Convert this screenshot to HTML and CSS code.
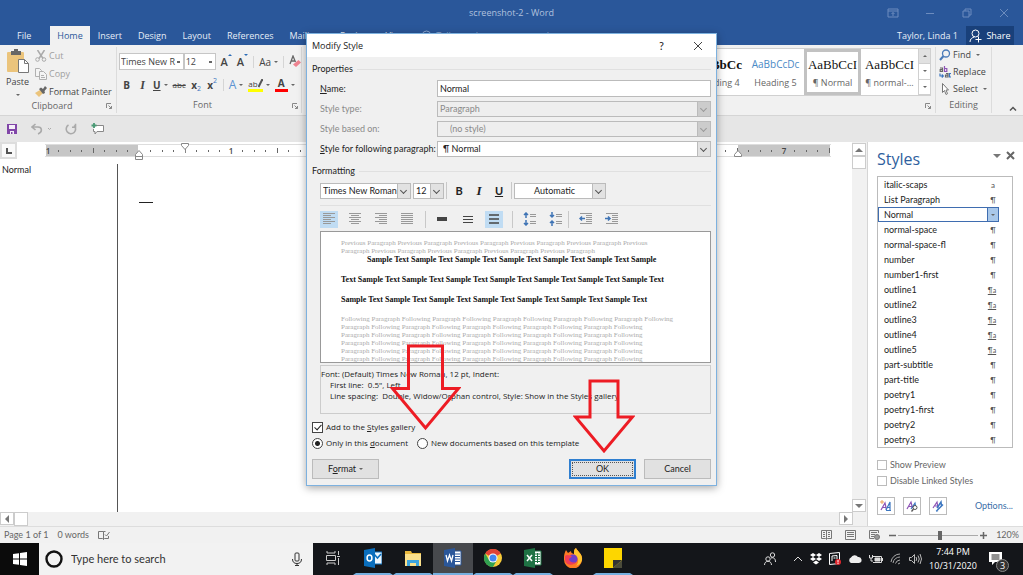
FILE: index.html
```html
<!DOCTYPE html>
<html lang="en">
<head>
<meta charset="utf-8">
<title>screenshot-2 - Word</title>
<link rel="stylesheet" href="styles.css">
</head>
<body>
<header class="top">
  <div class="titlebar">
    <h1 class="doc-title">screenshot-2 - Word</h1>
    <div class="win-buttons">
      <button aria-label="Ribbon options"><svg width="12" height="12" viewBox="0 0 12 12"><path d="M1 2h10v8H1zM1 4h10M6 9V5.500M4.500 7 6 5.500 7.500 7"/></svg></button>
      <button aria-label="Minimize"><svg width="12" height="12" viewBox="0 0 12 12"><path d="M2 6.500h8"/></svg></button>
      <button aria-label="Restore"><svg width="12" height="12" viewBox="0 0 12 12"><path d="M2 4h6v6H2zM4 4V2h6v6H8"/></svg></button>
      <button aria-label="Close window"><svg width="12" height="12" viewBox="0 0 12 12"><path d="M2 2l8 8M10 2l-8 8"/></svg></button>
    </div>
  </div>
  <nav class="tabs">
    <a href="#" class="tab tab-file">File</a>
    <a href="#" class="tab tab-active">Home</a>
    <a href="#" class="tab">Insert</a>
    <a href="#" class="tab">Design</a>
    <a href="#" class="tab">Layout</a>
    <a href="#" class="tab">References</a>
    <a href="#" class="tab">Mailings</a>
    <a href="#" class="tab">Review</a>
    <a href="#" class="tab">View</a>
    <a href="#" class="tab tab-tell"><svg width="11" height="11" viewBox="0 0 11 11"><circle cx="5.500" cy="5" r="4" fill="none" stroke="#8fa9d0"/></svg>Tell me what you want to do</a>
    <span class="user">Taylor, Linda 1</span>
    <button class="share"><svg width="13" height="14" viewBox="0 0 13 14"><circle cx="6.500" cy="4.500" r="3.500"/><path d="M1 13c0-3 2-4.500 4.500-5M9.500 7.500v6M6.500 10.500h6"/></svg>Share</button>
  </nav>
</header>

<section class="ribbon" aria-label="Home">
  <div class="group group-clip">
    <div class="group-main">
      <button class="paste">
        <svg width="24" height="25" viewBox="0 0 24 25"><rect x="1" y="3" width="17" height="20" rx="1" fill="#ebc47c"/><path d="M5 2h3V0h4v2h3v4H5z" fill="#666"/><path d="M12.500 10.500h6l4 4v9h-10z" fill="#fff" stroke="#777"/><path d="M18.500 10.500v4h4" fill="none" stroke="#777"/></svg>
        <span>Paste</span><i class="caret"></i>
      </button>
      <div class="clip-list">
        <button class="cmd dim"><svg width="12" height="12" viewBox="0 0 12 12" fill="none" stroke="#aaa"><path d="M2.500 0 8 8.500M9.500 0 4 8.500" stroke-width="1.500"/><circle cx="2.500" cy="9.500" r="1.800"/><circle cx="9" cy="9.500" r="1.800"/></svg>Cut</button>
        <button class="cmd dim"><svg width="12" height="12" viewBox="0 0 12 12" fill="#f4f4f4" stroke="#b0b0b0"><path d="M.5.5h4l2 2v6h-6z"/><path d="M4.500 3.500h4l3 3v5h-7zM6 7.500h3M6 9.500h4"/></svg>Copy</button>
        <button class="cmd"><svg width="12" height="12" viewBox="0 0 12 12"><path d="M0 7 5 4l3 3-4 4z" fill="#ebc47c"/><path d="M4 3 6 1.500 8 3l2-3 2 2-2.500 3L10 7 8 8z" fill="#666"/></svg>Format Painter</button>
      </div>
    </div>
    <div class="group-label">Clipboard<svg class="launch" viewBox="0 0 6 6"><path d="M.5 5V.5H5M2.500 2.500l3 3M5.500 3v2.500H3"/></svg></div>
  </div>
  <div class="group group-font">
    <div class="group-main font-main">
      <div class="font-row">
        <select class="rb-select rb-font" aria-label="Font"><option>Times New R</option></select>
        <select class="rb-select rb-size" aria-label="Font size"><option>12</option></select>
        <button class="fb big">A<sup class="up"></sup></button>
        <button class="fb big">A<sup class="dn"></sup></button>
        <i class="vsep"></i>
        <button class="fb">Aa<i class="caret"></i></button>
        <i class="vsep"></i>
        <button class="fb" aria-label="Clear formatting"><svg width="12" height="13" viewBox="0 0 12 13"><path d="M1 9 4 1l2.500 6M2 6h4" fill="none" stroke="#666" stroke-width="1.300"/><path d="M4 9.500 9.500 5 12 7.500 7 12z" fill="#ee8390"/></svg></button>
      </div>
      <div class="font-row tight">
        <button class="fb"><b>B</b></button>
        <button class="fb ital"><b>I</b></button>
        <button class="fb"><b><u>U</u></b><i class="caret"></i></button>
        <button class="fb strike">abc</button>
        <button class="fb"><b>x</b><sub>2</sub></button>
        <button class="fb"><b>x</b><sup>2</sup></button>
        <i class="vsep"></i>
        <button class="fb effect">A<i class="caret"></i></button>
        <button class="fb mark" aria-label="Highlight"><span>ab</span><svg width="5" height="9" viewBox="0 0 5 9"><path d="M4.500 0 .5 8" stroke="#555" stroke-width="2"/></svg></button><i class="caret loose"></i>
        <button class="fb color"><b>A</b><i class="caret"></i></button>
      </div>
    </div>
    <div class="group-label">Font<svg class="launch" viewBox="0 0 6 6"><path d="M.5 5V.5H5M2.500 2.500l3 3M5.500 3v2.500H3"/></svg></div>
  </div>
  <div class="group group-styles">
    <div class="group-main gallery">
      <button class="gal"><span class="h4">AaBbCc</span><small>Heading 4</small></button>
      <button class="gal"><span class="h5">AaBbCcDc</span><small>Heading 5</small></button>
      <button class="gal gal-on"><span>AaBbCcI</span><small>¶ Normal</small></button>
      <button class="gal"><span>AaBbCcI</span><small>¶ normal-...</small></button>
      <div class="gal-scroll">
        <button aria-label="Scroll up" class="off"><i class="caret flip"></i></button>
        <button aria-label="Scroll down"><i class="caret"></i></button>
        <button aria-label="More styles"><i class="caret over"></i></button>
      </div>
    </div>
    <div class="group-label"><svg class="launch" viewBox="0 0 6 6"><path d="M.5 5V.5H5M2.500 2.500l3 3M5.500 3v2.500H3"/></svg></div>
  </div>
  <div class="group group-edit">
    <div class="group-main edit-list">
      <button class="cmd"><svg width="12" height="12" viewBox="0 0 12 12" fill="none" stroke="#4a7ab8"><circle cx="7" cy="4.500" r="3.500" stroke-width="1.300"/><path d="M4.500 7 1 11" stroke-width="2"/></svg>Find <i class="caret"></i></button>
      <button class="cmd"><svg width="12" height="12" viewBox="0 0 12 12" fill="none" stroke="#666" stroke-width="1.200"><path d="M1 2h2.500v3.500H1.200V3.700H3.500M7 7.500h2v3.500H6.500V9.200H9"/><path d="M5.500 0v5.500h2.300V2.500H5.500" stroke="#8d53b5"/><path d="M12 7.500h-1.500V11H12M1 7.500V10h3M2.800 8.500 4.300 10l-1.500 1.500" stroke="#3b76c0"/></svg>Replace</button>
      <button class="cmd"><svg width="12" height="12" viewBox="0 0 12 12"><path d="M3.500.5v9l2-2 1.500 4 1.500-.8-1.500-3.700h2.500z" fill="#fff" stroke="#777"/></svg>Select<i class="caret"></i></button>
    </div>
    <div class="group-label">Editing</div>
  </div>
  <button class="collapse" aria-label="Collapse ribbon"><svg width="8" height="5" viewBox="0 0 8 5"><path d="M1 4.500 4 1.500l3 3" fill="none" stroke="#555" stroke-width="1.500"/></svg></button>
</section>

<div class="quick">
  <button aria-label="Save"><svg width="10" height="10" viewBox="0 0 10 10"><path d="M0 0h10v10H0z" fill="#8146a8"/><path d="M2 1h6v4H2zM3 7h4v3H3z" fill="#f4eef8"/><path d="M4 8h1.500v2H4z" fill="#8146a8"/></svg></button>
  <button aria-label="Undo"><svg width="20" height="12" viewBox="0 0 20 12" fill="none" stroke="#aaa" stroke-width="1.600"><path d="M4.500 1 1 4l3.500 3M1.500 4H7c4 0 5 5 0 7"/><path d="M17 5l1.500 1.500L20 5" stroke-width="1"/></svg></button>
  <button aria-label="Redo"><svg width="12" height="12" viewBox="0 0 12 12" fill="none" stroke="#aaa" stroke-width="1.600"><path d="M3.500 2A4.700 4.700 0 1 0 9 2.500M10.500.8v3.500H7"/></svg></button>
  <button aria-label="New comment"><svg width="13" height="12" viewBox="0 0 13 12"><path d="M4.500 2.500h8v6H6l-2 2.500V8.500H2.500V6" fill="#fff" stroke="#888"/><path d="M3 0v5M.5 2.500h5" stroke="#4a9a75" stroke-width="1.800"/></svg></button>
</div>

<main class="work">
  <div class="editor">
    <div class="pane">
      <div class="ruler">
        <button class="tabsel" aria-label="Tab selector"><svg width="6" height="6" viewBox="0 0 6 6"><path d="M1 0v5h5" fill="none" stroke="#555" stroke-width="2"/></svg></button>
        <svg class="rule" width="786" height="18" viewBox="0 0 786 18">
          <defs><pattern id="ticks" x="94" y="0" width="92" height="18" patternUnits="userSpaceOnUse"><path d="M11 8h1v2h-1zM23 8h1v2h-1zM34 8h1v2h-1zM46 6h1v5h-1zM57 8h1v2h-1zM69 8h1v2h-1zM80 8h1v2h-1z" fill="#666"/></pattern></defs>
          <path d="M0 2.500h786M0 14.500h786" stroke="#ddd"/>
          <path d="M1 3h92v11H1zM693 3h92v11h-92z" fill="#c6c6c6"/>
          <rect x="1" y="0" width="784" height="18" fill="url(#ticks)"/>
          <g font-family="Open Sans, sans-serif" font-size="8" font-weight="600" fill="#444" text-anchor="middle"><text x="3" y="12">1</text><text x="186" y="12">1</text><text x="739" y="12">7</text></g>
          <path d="M136.500 1.500h7v2l-3.500 4-3.500-4zM140.500 7v4M90.500 12.500l3.500-4 3.500 4v5h-7zM90.500 14.500h7M689.500 12.500l3.500-4 3.500 4v2h-7z" fill="#fff" stroke="#888"/>
        </svg>
      </div>
      <div class="page">
        <div class="style-area">Normal</div>
        <div class="paper"><i class="cursor"></i></div>
      </div>
    </div>
    <div class="vscroll"><button aria-label="Scroll up"><i class="tri up-t"></i></button><div class="thumb"></div><button class="end" aria-label="Scroll down"><i class="tri dn-t"></i></button></div>
    <div class="hscroll"><button aria-label="Scroll left"><i class="tri lf-t"></i></button><div class="thumb"></div><button class="end" aria-label="Scroll right"><i class="tri rt-t"></i></button></div>
  </div>
  <aside class="styles">
    <div class="styles-head"><h2>Styles</h2><button aria-label="Pane options"><i class="tri dn-t"></i></button><button aria-label="Close pane"><svg width="9" height="9" viewBox="0 0 9 9"><path d="M1 1l7 7M8 1 1 8" stroke="#666" stroke-width="2"/></svg></button></div>
    <ul class="style-list">
      <li><button>italic-scaps<span class="mk ch">a</span></button></li>
      <li><button>List Paragraph<span class="mk">¶</span></button></li>
      <li><button class="sel">Normal<span class="drop"><i class="caret"></i></span></button></li>
      <li><button>normal-space<span class="mk">¶</span></button></li>
      <li><button>normal-space-fl<span class="mk">¶</span></button></li>
      <li><button>number<span class="mk">¶</span></button></li>
      <li><button>number1-first<span class="mk">¶</span></button></li>
      <li><button>outline1<span class="mk ln">¶a</span></button></li>
      <li><button>outline2<span class="mk ln">¶a</span></button></li>
      <li><button>outline3<span class="mk ln">¶a</span></button></li>
      <li><button>outline4<span class="mk ln">¶a</span></button></li>
      <li><button>outline5<span class="mk ln">¶a</span></button></li>
      <li><button>part-subtitle<span class="mk">¶</span></button></li>
      <li><button>part-title<span class="mk">¶</span></button></li>
      <li><button>poetry1<span class="mk">¶</span></button></li>
      <li><button>poetry1-first<span class="mk">¶</span></button></li>
      <li><button>poetry2<span class="mk">¶</span></button></li>
      <li><button>poetry3<span class="mk">¶</span></button></li>
    </ul>
    <div class="checks">
      <label><input type="checkbox">Show Preview</label>
      <label><input type="checkbox">Disable Linked Styles</label>
    </div>
    <div class="styles-foot">
      <button aria-label="New style"><svg width="12" height="12" viewBox="0 0 12 12" fill="none"><path d="M1 10 5 3l1.500 7M3 7.500h3" stroke="#8d53b5" stroke-width="1.200"/><path d="M6 10l4-8v8M7 7.500h3M6 10.500h5" stroke="#3b76c0" stroke-width="1.200"/><path d="M0 2h4M2 0v4" stroke="#eda35a"/></svg></button>
      <button aria-label="Style inspector"><svg width="12" height="12" viewBox="0 0 12 12" fill="none"><path d="M1 9 5 2l1.500 6M3 6.500h3" stroke="#8d53b5" stroke-width="1.200"/><path d="M5 9l4-6 .5 3" stroke="#3b76c0" stroke-width="1.200"/><circle cx="9" cy="7.500" r="2" stroke="#555"/><path d="M7.500 9 5.500 11.500" stroke="#555" stroke-width="1.300"/></svg></button>
      <button aria-label="Manage styles"><svg width="12" height="12" viewBox="0 0 12 12" fill="none"><path d="M1 8 5 2l1 6M3 6h3" stroke="#8d53b5" stroke-width="1.200"/><path d="M5 8 9 2l.5 4M5 10.500l6-6M4 11l2-.5" stroke="#3b76c0" stroke-width="1.500"/></svg></button>
      <a href="#">Options...</a>
    </div>
  </aside>
</main>

<footer class="status">
  <span>Page 1 of 1</span><span>0 words</span>
  <svg width="12" height="11" viewBox="0 0 12 11" fill="none" stroke="#777"><path d="M5.500 1.500H.5v7h4l1 1 1-1h4V6M5.500 1.500v8M5.500 1.500h2M7 4.500l1.500 1.500 3-4"/></svg>
  <div class="views">
    <svg width="11" height="10" viewBox="0 0 11 10" fill="none" stroke="#777"><path d="M.5.5h10v8H6.500l-1 1-1-1h-4zM5.500 1v8M2 2.500h2M2 4.500h2M2 6.500h2M7 2.500h2M7 4.500h2M7 6.500h2"/></svg>
    <svg width="11" height="10" viewBox="0 0 11 10" fill="none" stroke="#777"><path d="M.5.5h10v9H.5zM2 2.500h7M2 4.500h7M2 6.500h7"/></svg>
    <svg width="11" height="10" viewBox="0 0 11 10" fill="none" stroke="#777"><path d="M5 8.500H.5v-8h9V3M2 2.500h6M2 4.500h4M2 6.500h3"/><circle cx="8" cy="7" r="2.500" fill="#999"/></svg>
  </div>
  <div class="zoomer"><button aria-label="Zoom out"><svg width="7" height="7" viewBox="0 0 7 7"><path d="M0 3.500h7" stroke="#666" stroke-width="1.500"/></svg></button><input type="range" min="0" max="100" value="53" aria-label="Zoom"><button aria-label="Zoom in"><svg width="7" height="7" viewBox="0 0 7 7"><path d="M0 3.500h7M3.500 0v7" stroke="#666" stroke-width="1.500"/></svg></button></div>
  <span class="pct">120%</span>
</footer>

<div class="taskbar">
  <button class="start" aria-label="Start"><svg width="14" height="14" viewBox="0 0 14 14" fill="#fff"><path d="M0 2l6-.8v5.300H0zM7 1l7-1v6.500H7zM0 7.500h6v5.300L0 12zM7 7.500h7V14l-7-1z"/></svg></button>
  <label class="search"><svg width="18" height="18" viewBox="0 0 18 18"><circle cx="9" cy="9" r="7.500" fill="none" stroke="#111" stroke-width="2.400"/></svg><input type="text" placeholder="Type here to search" aria-label="Search"><svg width="10" height="14" viewBox="0 0 10 14" fill="none" stroke="#333"><rect x="3" y="1" width="4" height="8" rx="1"/><path d="M.5 7c0 3 1.500 4.500 4.500 4.500S9.500 10 9.500 7M5 11.500V13M3 13.500h4"/></svg></label>
  <div class="apps">
    <button aria-label="Task view"><svg width="14" height="14" viewBox="0 0 14 14" fill="none" stroke="#ccc"><path d="M1 0v2h8V0M.5 4.500h9v5h-9zM1 14v-2h8v2M12.500 0v4M12.500 7v7M11 5.500h3"/></svg></button>
    <button class="run" aria-label="Outlook"><svg width="18" height="20" viewBox="0 0 18 20"><path d="M9 4h9v12H9z" fill="#eef6fc" stroke="#0a6ebd"/><path d="M10 6l3.500 4L17 6" fill="none" stroke="#0a6ebd" stroke-width="1.500"/><path d="M0 2 11 0v20L0 18z" fill="#0a6ebd"/><ellipse cx="5.500" cy="10" rx="2.400" ry="3" fill="none" stroke="#fff" stroke-width="1.500"/></svg></button>
    <button class="run" aria-label="File Explorer"><svg width="18" height="18" viewBox="0 0 18 18"><path d="M1 2h6l1 2h9v13H1z" fill="#e9b83d"/><path d="M1 5h16v12H1z" fill="#fbe08b"/><path d="M3 17v-6h12v6h-3v-3H6v3z" fill="#3ea4dd"/></svg></button>
    <button class="run on" aria-label="Word"><svg width="18" height="20" viewBox="0 0 18 20"><path d="M9 3h8v14H9z" fill="#fff" stroke="#2b579a"/><path d="M11 6h5M11 8.500h5M11 11h5M11 13.500h5" stroke="#2b579a"/><path d="M0 2 11 0v20L0 18z" fill="#2b579a"/><path d="M2 7l1.500 6 2-6 2 6L9 7" fill="none" stroke="#fff" stroke-width="1.300"/></svg></button>
    <button class="run" aria-label="Chrome"><svg width="18" height="18" viewBox="0 0 18 18"><circle cx="9" cy="9" r="9" fill="#f8cc3a"/><path d="M9 9 1.200 4.500A9 9 0 0 1 16.800 4.500z" fill="#e04236"/><path d="M1.200 4.500A9 9 0 0 0 9 18l4-7-4-2-4 2z" fill="#31a151"/><circle cx="9" cy="9" r="4.500" fill="#fff"/><circle cx="9" cy="9" r="3.500" fill="#4385f0"/></svg></button>
    <button class="run" aria-label="Excel"><svg width="18" height="20" viewBox="0 0 18 20"><path d="M9 3h8v14H9z" fill="#fff" stroke="#1f7244"/><path d="M11 6h5M11 8.500h5M11 11h5M11 13.500h5M13.500 5v10" stroke="#1f7244"/><path d="M0 2 11 0v20L0 18z" fill="#1f7244"/><path d="M3 7l5 6M8 7l-5 6" fill="none" stroke="#fff" stroke-width="1.500"/></svg></button>
    <button aria-label="Firefox"><svg width="20" height="20" viewBox="0 0 20 20"><path d="M1 9C1 6 2 4 3 2l2 3 3-2c0 2 1 2 3 3 0-3 0-5 2-6 1 3 7 6 6 12a9 9 0 0 1-18-1z" fill="#ff7a24"/><path d="M13 0c1 3 7 6 6 12-1 4-4 5-6 6 4-5 2-9-2-12 0-3 0-5 2-6z" fill="#ffc52e"/><circle cx="10" cy="11" r="4.500" fill="#6f3fc8"/><path d="M2 8c2-2 5 0 7 0-1 2-3 2-3 3 0 3 4 4 7 3-2 4-10 4-11-2z" fill="#f23d55"/></svg></button>
    <button class="run" aria-label="Sticky Notes"><svg width="18" height="20" viewBox="0 0 18 20"><path d="M0 0h18v20H0z" fill="#fdd600"/><path d="M9 20v-8h9z" fill="#333"/><path d="M9 20h9v-8z" fill="#4b4b3a"/></svg></button>
  </div>
  <div class="tray">
    <svg class="people" width="12" height="14" viewBox="0 0 12 14" fill="none" stroke="#ddd"><circle cx="8.500" cy="3" r="2.200"/><circle cx="4" cy="7" r="2.200"/><path d="M.5 13c0-5 7-5 7 0M7 6c3-1 4.500 1 4.500 4"/></svg>
    <svg width="10" height="12" viewBox="0 0 10 12" fill="none" stroke="#ddd"><path d="M1 8l4-4 4 4"/></svg>
    <svg width="12" height="12" viewBox="0 0 12 12" fill="#fff"><path d="M3 0l3 2-3 2-3-2zM9 0l3 2-3 2-3-2zM3 4l3 2-3 2-3-2zM9 4l3 2-3 2-3-2zM6 7.500l3 2-3 2-3-2z"/></svg>
    <svg width="12" height="14" viewBox="0 0 12 14" fill="none" stroke="#fff"><path d="M.5 1.500l10-1v11l-10 1zM3 9V4l5-.5V7M4.500 6h2"/><circle cx="9" cy="10" r="3" fill="#e0262c" stroke="none"/><path d="M9 8v2.500M9 11v1"/></svg>
    <svg width="14" height="12" viewBox="0 0 14 12" fill="#eee"><path d="M3 10a3 3 0 0 1 0-5.500 4 4 0 0 1 7-.5 3 3 0 0 1 1 6z"/></svg>
    <svg width="14" height="12" viewBox="0 0 14 12" fill="none" stroke="#ddd"><path d="M4 3.500h8.500v6H4M13.500 5v3"/><path d="M6 5h5v3H6z" fill="#ddd"/><path d="M.5 2v3h3V2M2 5v3h2"/></svg>
    <svg width="12" height="12" viewBox="0 0 12 12" fill="none" stroke="#aaa"><path d="M1 9a9 9 0 0 1 9-8M3 10a7 7 0 0 1 7-6M5.500 10.500A5 5 0 0 1 10 7M8 11l2-1"/></svg>
    <svg width="13" height="12" viewBox="0 0 13 12" fill="none" stroke="#bbb"><path d="M.5 4.500h2l3-3v9l-3-3h-2zM7 4q1.500 2 0 4M9 2.500q2.500 3.500 0 7M11 1q3 5 0 10"/></svg>
  </div>
  <div class="clock"><span>7:44 PM</span><span>10/31/2020</span></div>
  <button class="notif" aria-label="Notifications"><svg width="13" height="14" viewBox="0 0 13 14"><path d="M0 0h13v10H6l-3 3v-3H0z" fill="#fff"/><path d="M2.500 3h8M2.500 5h8M2.500 7h8" stroke="#222"/></svg><span>3</span></button>
</div>

<div class="overlay">
<form class="dialog" aria-label="Modify Style">
  <div class="dlg-title"><h2>Modify Style</h2><button type="button" aria-label="Help">?</button><button type="button" aria-label="Close"><svg width="10" height="10" viewBox="0 0 10 10"><path d="M1 1l8 8M9 1 1 9" stroke="#444"/></svg></button></div>
  <div class="dlg-body">
    <h3 class="legend">Properties</h3>
    <div class="props">
      <label for="nm"><u>N</u>ame:</label><input id="nm" type="text" value="Normal">
      <label for="ty" class="off">Style type:</label><span class="combo off"><select id="ty" disabled><option>Paragraph</option></select></span>
      <label for="bs" class="off">Style based on:</label><span class="combo off based"><select id="bs" disabled><option>(no style)</option></select></span>
      <label for="fl"><u>S</u>tyle for following paragraph:</label><span class="combo"><select id="fl"><option>¶ Normal</option></select></span>
    </div>
    <h3 class="legend">Formatting</h3>
    <div class="fmt">
      <span class="combo c-font"><select aria-label="Font family"><option>Times New Roman</option></select></span>
      <span class="combo c-size"><select aria-label="Size"><option>12</option></select></span>
      <i class="sep"></i>
      <button type="button"><b>B</b></button><button type="button" class="ital"><b>I</b></button><button type="button"><b><u>U</u></b></button>
      <i class="sep"></i>
      <span class="combo c-color"><select aria-label="Font color"><option>Automatic</option></select></span>
    </div>
    <div class="tools">
      <div class="set">
        <button type="button" class="on" aria-label="Align left"><svg width="12" height="12" viewBox="0 0 12 12"><path d="M0 .5h12M0 2.500h8M0 4.500h12M0 6.500h8M0 8.500h12M0 10.500h8"/></svg></button>
        <button type="button" aria-label="Center"><svg width="12" height="12" viewBox="0 0 12 12"><path d="M0 .5h12M2 2.500h8M0 4.500h12M2 6.500h8M0 8.500h12M2 10.500h8"/></svg></button>
        <button type="button" aria-label="Align right"><svg width="12" height="12" viewBox="0 0 12 12"><path d="M0 .5h12M4 2.500h8M0 4.500h12M4 6.500h8M0 8.500h12M4 10.500h8"/></svg></button>
        <button type="button" aria-label="Justify"><svg width="12" height="12" viewBox="0 0 12 12"><path d="M0 .5h12M0 2.500h12M0 4.500h12M0 6.500h12M0 8.500h12M0 10.500h12"/></svg></button>
      </div>
      <div class="set dark">
        <button type="button" aria-label="Single spacing"><svg width="10" height="10" viewBox="0 0 10 10"><path d="M0 3h10v4H0z" fill="#444" stroke="none"/></svg></button>
        <button type="button" aria-label="1.5 spacing"><svg width="10" height="10" viewBox="0 0 10 10"><path d="M0 2.500h10M0 5.500h10M0 8.500h10"/></svg></button>
        <button type="button" class="on" aria-label="Double spacing"><svg width="10" height="10" viewBox="0 0 10 10"><path d="M0 1h10M0 5h10M0 9h10" stroke-width="1.700"/></svg></button>
      </div>
      <div class="set">
        <button type="button" aria-label="Increase paragraph spacing"><svg width="13" height="14" viewBox="0 0 13 14"><path d="M7 2.500h6M7 4.500h6M7 9.500h6M7 11.500h6"/><path class="bl" d="M3 1v5M1 3l2-2 2 2M3 8v5M1 11l2 2 2-2"/></svg></button>
        <button type="button" aria-label="Decrease paragraph spacing"><svg width="13" height="14" viewBox="0 0 13 14"><path d="M7 2.500h6M7 4.500h6M7 9.500h6M7 11.500h6"/><path class="bl" d="M3 0v5M1 3l2 2 2-2M3 9v5M1 11l2-2 2 2"/></svg></button>
      </div>
      <div class="set near">
        <button type="button" aria-label="Decrease indent"><svg width="13" height="12" viewBox="0 0 13 12"><path d="M1 .5h12M7 2.500h6M7 4.500h6M7 6.500h6M7 8.500h6M1 10.500h12"/><path class="bl" d="M6 5.500H1M3 3.500l-2 2 2 2"/></svg></button>
        <button type="button" aria-label="Increase indent"><svg width="13" height="12" viewBox="0 0 13 12"><path d="M1 .5h12M7 2.500h6M7 4.500h6M7 6.500h6M7 8.500h6M1 10.500h12"/><path class="bl" d="M0 5.500h5M3 3.500l2 2-2 2"/></svg></button>
      </div>
    </div>
    <div class="preview">
      <p class="ghost">Previous Paragraph Previous Paragraph Previous Paragraph Previous Paragraph Previous Paragraph Previous<br>Paragraph Previous Paragraph Previous Paragraph Previous Paragraph Previous Paragraph</p>
      <p class="sample">Sample Text Sample Text Sample Text Sample Text Sample Text Sample Text Sample<br>Text Sample Text Sample Text Sample Text Sample Text Sample Text Sample Text Sample Text<br>Sample Text Sample Text Sample Text Sample Text Sample Text Sample Text Sample Text</p>
      <p class="ghost">Following Paragraph Following Paragraph Following Paragraph Following Paragraph Following Paragraph Following<br>Paragraph Following Paragraph Following Paragraph Following Paragraph Following Paragraph Following<br>Paragraph Following Paragraph Following Paragraph Following Paragraph Following Paragraph Following<br>Paragraph Following Paragraph Following Paragraph Following Paragraph Following Paragraph Following<br>Paragraph Following Paragraph Following Paragraph Following Paragraph Following Paragraph Following<br>Paragraph Following Paragraph Following Paragraph Following Paragraph Following Paragraph Following</p>
    </div>
    <div class="desc"><p>Font: (Default) Times New Roman, 12 pt, Indent:</p><p class="in">First line:&nbsp; 0.5", Left</p><p class="in">Line spacing:&nbsp; Double, Widow/Orphan control, Style: Show in the Styles gallery</p></div>
    <div class="opts">
      <label><input type="checkbox" checked><span>Add to the <u>S</u>tyles gallery</span></label>
      <div class="radios"><label><input type="radio" name="scope" checked><span>Only in this <u>d</u>ocument</span></label><label><input type="radio" name="scope"><span>New documents based on this template</span></label></div>
    </div>
    <div class="actions"><button type="button" class="btn"><span>F<u>o</u>rmat</span><i class="caret"></i></button><button type="submit" class="btn primary">OK</button><button type="button" class="btn">Cancel</button></div>
  </div>
  <svg class="arrow arrow-a" width="72" height="90" viewBox="0 0 72 90"><path d="M19.500 2h34v42.500h16L36.500 84 3.500 44.500h16z"/></svg>
  <svg class="arrow arrow-b" width="62" height="77" viewBox="0 0 62 77"><path d="M17 3h28v36h14.500L31 73 2.500 39H17z"/></svg>
</form>
</div>
</body>
</html>
```
FILE: styles.css
```css
* { box-sizing: border-box; margin: 0; padding: 0; }
body { display: flex; flex-direction: column; min-height: 100vh; position: relative; font: 9px/12px "Open Sans", "Noto Sans", sans-serif; color: #444; background: #fff; }
button, input, select { font: inherit; color: inherit; background: none; border: 0; border-radius: 0; }
button { display: inline-flex; align-items: center; justify-content: center; white-space: nowrap; }
h1, h2, h3 { font-weight: 400; }
a { text-decoration: none; color: inherit; }
svg { display: block; flex: none; }
select { appearance: none; }

/* window header */
.top { background: #2a579a; color: #e6edf7; }
.titlebar { height: 26px; display: grid; grid-template-columns: 1fr auto 1fr; align-items: center; }
.doc-title { grid-column: 2; font-size: 9px; color: #b0c1de; }
.win-buttons { display: flex; justify-content: flex-end; gap: 25px; padding-right: 13px; }
.win-buttons path { fill: none; stroke: #6c8cbe; }
.tabs { display: flex; height: 19px; align-items: stretch; white-space: nowrap; }
.tab { padding: 0 8px; line-height: 19px; }
.tab-file { padding: 0 19px 0 17px; }
.tab-active { background: #f1f1f1; color: #2a579a; padding: 0 7px; }
.tab-tell { display: flex; align-items: center; gap: 4px; color: #8fa9d0; }
.user { margin-left: auto; line-height: 19px; padding-right: 8px; }
.share { background: #19407a; width: 48px; gap: 4px; margin-right: 9px; color: #fff; }
.share svg { fill: none; stroke: #fff; }

/* ribbon */
.ribbon { display: flex; height: 71px; background: #f1f1f1; border-bottom: 1px solid #d5d5d5; }
.group { display: flex; flex-direction: column; border-right: 1px solid #dcdcdc; margin: 2px 0; padding-top: 2px; }
.group-main { flex: 1; display: flex; }
.group-label { height: 17px; display: flex; justify-content: center; align-items: center; color: #666; position: relative; }
.launch { position: absolute; right: 4px; bottom: 4px; width: 6px; height: 6px; fill: none; stroke: #888; stroke-width: 1; }
.group-font .launch { right: 3px; }
.group-clip { width: 117px; }
.group-font { width: 185px; }
.group-font .group-label { padding-right: 13px; }
.group-clip .group-label { padding-right: 12px; }
.group-styles { margin-left: auto; padding: 1px 4px 0 0; }
.group-styles .launch { right: 0; }
.group-edit { width: 56px; }
.paste { flex-direction: column; justify-content: flex-start; width: 35px; gap: 2px; }
.paste .caret { margin-top: 4px; }
.clip-list { display: flex; flex-direction: column; gap: 6px; padding-top: 1px; }
.cmd { height: 12px; gap: 2px; justify-content: flex-start; }
.dim { color: #a0a0a0; }
.caret { display: inline-block; flex: none; border: 2px solid transparent; border-top-color: #666; border-bottom: 0; margin-left: 3px; }
.paste .caret, .gal-scroll .caret, .drop .caret { margin-left: 0; }
.caret.loose { margin-left: -2px; }
.flip { transform: rotate(180deg); }
.font-main { flex-direction: column; padding-left: 2px; gap: 6px; padding-top: 4px; }
.font-row { display: flex; align-items: center; height: 17px; gap: 5px; }
.tight { padding-left: 2px; }
.rb-select { height: 17px; border: 1px solid #c6c6c6; background: #fff linear-gradient(#666, #666) no-repeat right 3px center / 3px 2px; padding-left: 1px; }
.rb-font { width: 65px; }
.rb-size { width: 32px; margin-left: -5px; }
.vsep { width: 1px; height: 12px; background: #d5d5d5; }
.fb { font-size: 10px; height: 15px; }
.tight .fb { min-width: 11px; }
.big { font-size: 11px; font-weight: 600; }
.fb sup, .fb sub { font-size: 7px; line-height: 7px; color: #3b76c0; }
.fb sup { align-self: flex-start; }
.fb sub { align-self: flex-end; }
.up, .dn { border: 2px solid transparent; }
.up { border-bottom-color: #2a6cb8; border-top: 0; }
.dn { border-top-color: #2a6cb8; border-bottom: 0; }
.ital { font-family: "Liberation Serif", serif; font-style: italic; font-size: 12px; }
.strike { text-decoration: line-through; font-size: 8px; }
.effect { font-size: 12px; color: #5b93d2; }
.mark { font-size: 8px; line-height: 11px; border-bottom: 3px solid #ff0; }
.color b { border-bottom: 3px solid red; line-height: 11px; padding: 0 3px; }
.gallery { flex: none; height: 48px; border: 1px solid #d0d0d0; background: #fff; }
.gal { width: 57px; flex-direction: column; overflow: hidden; gap: 4px; border: 3px solid transparent; }
.gal span { font: 13px/17px "Liberation Serif", serif; color: #111; }
.gal small { font-size: 9px; color: #666; }
.gal .h4 { font-weight: 700; }
.gal .h5 { font: 10px/17px "Open Sans", sans-serif; color: #4a8ac6; }
.gal-on { border-color: #c2c2c2; }
.gal-scroll { width: 12px; display: flex; flex-direction: column; border-left: 1px solid #d0d0d0; }
.gal-scroll button { flex: 1; border-bottom: 1px solid #d0d0d0; }
.gal-scroll .off { background: #e1e1e1; }
.group-styles .group-label { margin-top: auto; }
.edit-list { flex-direction: column; gap: 5px; padding-left: 3px; }
.collapse { width: 31px; padding-left: 11px; align-self: flex-end; height: 14px; }

.quick { height: 26px; background: #e6e6e6; display: flex; align-items: center; padding: 0 7px; gap: 14px; }

/* document */
.work { flex: 1; display: flex; min-height: 384px; }
.editor { flex: 1; min-width: 0; display: grid; grid-template: 1fr 14px / 1fr 15px; }
.pane { display: flex; flex-direction: column; overflow: hidden; min-width: 0; }
.ruler { display: flex; height: 18px; gap: 28px; }
.tabsel { width: 17px; height: 17px; border: 2px solid #ddd; background: #fafafa; }
.page { flex: 1; display: flex; margin-top: 4px; }
.style-area { width: 118px; border-right: 1px solid #555; padding-left: 2px; color: #222; font-family: Lato, sans-serif; }
.cursor { display: block; width: 14px; height: 1px; background: #222; margin: 38px 0 0 21px; }
.vscroll, .hscroll { display: flex; background: #f1f1f1; }
.vscroll { flex-direction: column; padding-top: 1px; }
.hscroll { grid-column: 1 / -1; padding-right: 14px; }
.vscroll button, .hscroll button, .thumb { width: 14px; height: 13px; border: 1px solid #ccc; background: #fff; }
.hscroll .thumb { height: 14px; }
.end { margin-left: auto; }
.vscroll .end { margin: auto 0 0; }
.tri { border: 4px solid transparent; }
.up-t { border-bottom-color: #777; border-top: 0; }
.dn-t { border-top-color: #777; border-bottom: 0; }
.lf-t { border-right-color: #777; border-left: 0; }
.rt-t { border-left-color: #777; border-right: 0; }

/* styles pane */
.styles { width: 156px; border-left: 1px solid #d5d5d5; padding: 5px 10px 0 9px; font-family: Lato, sans-serif; }
.styles-head { display: flex; height: 29px; gap: 5px; align-items: flex-start; margin-right: -2px; }
.styles-head h2 { font: 16px/24px "Open Sans", sans-serif; color: #2f5f9e; margin-right: auto; }
.styles-head button { height: 17px; }
.style-list { list-style: none; border: 1px solid #bbb; color: #222; }
.style-list button { width: 100%; height: 15px; padding: 0 15px 0 6px; justify-content: space-between; }
.style-list .sel { border: 1px solid #3f6db0; width: 121px; padding: 0 0 0 5px; }
.mk { width: 8px; text-align: center; font-size: 8px; color: #555; }
.ln { text-decoration: underline; font-size: 7px; width: 10px; }
.drop { width: 11px; height: 13px; background: #a9c8ea; border-left: 1px solid #3f6db0; display: flex; align-items: center; justify-content: center; }
.checks { display: flex; flex-direction: column; gap: 4px; margin-top: 11px; color: #666; }
.checks label { display: flex; align-items: center; gap: 3px; }
.checks input { appearance: none; width: 10px; height: 10px; border: 1px solid #bbb; background: #fff; }
.styles-foot { display: flex; align-items: center; gap: 8px; margin-top: 10px; }
.styles-foot button { width: 18px; height: 18px; border: 1px solid #bbb; }
.styles-foot a { margin-left: auto; color: #3a6ea8; }

.status { display: flex; align-items: center; height: 17px; background: #f1f1f1; border-top: 1px solid #ddd; padding: 0 4px; gap: 9px; color: #666; font-family: Lato, sans-serif; }
.views { margin-left: auto; display: flex; gap: 13px; }
.zoomer { display: flex; align-items: center; gap: 2px; }
.zoomer input { appearance: none; width: 80px; height: 11px; background: linear-gradient(#aaa, #aaa) no-repeat center / 100% 1px; }
.zoomer input::-webkit-slider-thumb { appearance: none; width: 4px; height: 9px; background: #666; }

/* taskbar */
.taskbar { display: flex; height: 32px; background: #14161a; color: #fff; }
.start { width: 39px; background: #0b0b0b; }
.search { width: 274px; background: #f2f2f2; color: #333; display: flex; align-items: center; padding: 0 11px 0 6px; gap: 8px; }
.search input { flex: 1; min-width: 0; font-size: 11px; outline: 0; font-family: Lato, sans-serif; }
.search input::placeholder { color: #333; }
.apps { display: flex; }
.apps button { width: 40px; border-bottom: 2px solid transparent; background-clip: padding-box; }
.apps .run { border-bottom-color: #76b0e0; border-left: 3px solid transparent; border-right: 3px solid transparent; width: 40px; }
.apps .on { background: #47494d; border-left-width: 0; border-right-width: 0; }
.tray { display: flex; align-items: center; margin-left: auto; gap: 7px; }
.people { margin-right: 10px; }
.clock { width: 62px; display: flex; flex-direction: column; align-items: center; justify-content: center; line-height: 14px; }
.notif { width: 39px; position: relative; padding-right: 16px; }
.notif span { position: absolute; right: 14px; bottom: 3px; width: 13px; height: 13px; border-radius: 50%; background: #333; border: 1px solid #888; line-height: 11px; }

/* dialog */
.overlay { position: absolute; inset: 0; display: flex; justify-content: center; align-items: flex-start; padding-top: 33px; }
.dialog { position: relative; width: 411px; border: 1px solid #7db1df; background: #f0f0f0; color: #222; box-shadow: 0 2px 8px rgba(0, 0, 0, .35); font-family: Lato, "Open Sans", sans-serif; }
.dlg-title { display: flex; align-items: center; height: 23px; background: #fff; padding: 0 13px 0 5px; gap: 29px; }
.dlg-title h2 { font: 9px/12px "Open Sans", sans-serif; margin-right: auto; }
.dlg-title button { font-size: 11px; }
.dlg-body { padding: 6px 5px 6px; }
.legend { display: flex; align-items: center; gap: 4px; font-size: 9px; height: 12px; }
.legend::after { content: ""; flex: 1; height: 1px; background: #e0e0e0; }
.props { display: grid; grid-template-columns: 117px 1fr; gap: 4px 0; padding-left: 8px; margin: 5px 0 8px; align-items: center; }
.props label { white-space: nowrap; }
.props input { height: 17px; border: 1px solid #bbb; background: #fff; padding: 0 2px; min-width: 0; }
.off { color: #8a8a8a; }
.combo { position: relative; display: block; height: 16px; border: 1px solid #bbb; background: #fff; }
.combo select { width: 100%; height: 14px; padding: 0 13px 0 2px; opacity: 1; display: block; }
.combo::before { content: ""; position: absolute; right: 0; top: 0; bottom: 0; width: 12px; background: #e2e2e2; border-left: 1px solid #bbb; pointer-events: none; }
.combo::after { content: ""; position: absolute; right: 4px; top: 4px; width: 4px; height: 4px; border: solid #555; border-width: 0 1px 1px 0; transform: rotate(45deg); pointer-events: none; }
.combo.off { background: #eee; }
.combo.off::before { background: #ccc; }
.combo.off::after { border-color: #999; }
.props #fl { padding-left: 5px; }
.based select { padding-left: 12px; }
.fmt { display: flex; align-items: center; padding: 5px 0 6px; margin: 0 0 4px 8px; border-bottom: 1px solid #e0e0e0; }
.fmt button { width: 20px; font-size: 11px; height: 16px; }
.fmt .ital { font-size: 13px; }
.c-font { width: 91px; margin-right: 2px; }
.c-size { width: 31px; }
.c-color { width: 92px; }
.c-color select { text-align: center; }
.sep { width: 1px; height: 17px; background: #c8c8c8; margin: 0 2px; }
.tools { display: flex; align-items: center; padding-left: 8px; height: 18px; margin-bottom: 3px; }
.set { display: flex; gap: 8px; }
.set + .set { margin-left: 9px; padding-left: 7px; border-left: 1px solid #c8c8c8; }
.set + .near { margin-left: 4px; }
.tools button { width: 18px; height: 17px; }
.tools .on { background: #c0dcf3; }
.tools svg { fill: none; stroke: #999; }
.tools .dark svg { stroke: #444; }
.tools .bl { stroke: #3f74b5; stroke-width: 1.5; }
.preview { height: 132px; margin-left: 8px; border: 1px solid #999; background: #fff; padding: 7px 0 0 20px; overflow: hidden; white-space: nowrap; }
.ghost { font: 7px/8px "Liberation Serif", serif; color: #aaa; }
.sample { font: 700 8px/20px "Liberation Serif", serif; color: #111; text-indent: 26px; margin: -5px 0 0; }
.sample + .ghost { margin-top: 5px; }
.desc { margin: 2px 0 0 8px; height: 49px; border: 1px solid #ccc; padding: 2px 0; white-space: nowrap; font: 8px/11px "Open Sans", sans-serif; }
.desc .in { padding-left: 9px; }
.opts { margin-top: 7px; display: flex; flex-direction: column; gap: 4px; font: 8px/12px "Open Sans", sans-serif; }
.opts label { display: flex; align-items: center; gap: 3px; white-space: nowrap; }
.opts input { appearance: none; width: 11px; height: 11px; border: 1px solid #444; background: #fff; }
.opts input[type=radio] { border-radius: 50%; }
.opts input[type=radio]:checked { background: radial-gradient(circle, #222 2px, #fff 3px); }
.opts input[type=checkbox]::after { content: ""; display: block; width: 3px; height: 6px; margin: 0 0 0 3px; border: solid #222; border-width: 0 1px 1px 0; transform: rotate(42deg); }
.radios { display: flex; gap: 9px; }
.actions { display: flex; gap: 8px; margin-top: 10px; }
.btn { width: 67px; height: 20px; border: 1px solid #bbb; background: #e1e1e1; }
.primary { margin-left: auto; border: 2px solid #2f7fd0; outline: 1px dotted #555; outline-offset: -4px; }
.arrow { position: absolute; fill: none; stroke: #ed1c24; stroke-width: 3; }
.arrow-a { left: 82px; top: 310px; }
.arrow-b { left: 266px; top: 344px; }
```
